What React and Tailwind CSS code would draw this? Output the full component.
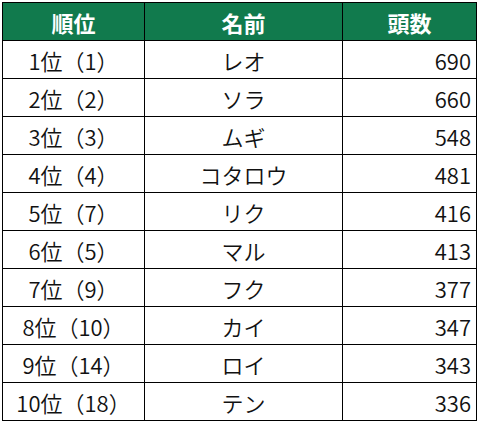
import React from 'react';

const rows = [
    ['1位（1）', 'レオ', '690'],
    ['2位（2）', 'ソラ', '660'],
    ['3位（3）', 'ムギ', '548'],
    ['4位（4）', 'コタロウ', '481'],
    ['5位（7）', 'リク', '416'],
    ['6位（5）', 'マル', '413'],
    ['7位（9）', 'フク', '377'],
    ['8位（10）', 'カイ', '347'],
    ['9位（14）', 'ロイ', '343'],
    ['10位（18）', 'テン', '336'],
];

const App = () => {
    return (
        <div className="w-[480px] h-[424px] bg-white pt-[2px] pl-[2px]" style={{ fontFamily: '"Noto Sans CJK JP", "Noto Sans", sans-serif' }}>
            <table className="border-collapse table-fixed w-[474px] text-[22px] text-[#111] font-[350]">
                <colgroup>
                    <col className="w-[142px]" />
                    <col className="w-[198px]" />
                    <col className="w-[134px]" />
                </colgroup>
                <thead>
                    <tr className="h-[38px] bg-[#117a4d] text-white">
                        <th className="border border-black text-center p-0 leading-none font-bold">順位</th>
                        <th className="border border-black text-center p-0 leading-none font-bold">名前</th>
                        <th className="border border-black text-center p-0 leading-none font-bold">頭数</th>
                    </tr>
                </thead>
                <tbody>
                    {rows.map(([rank, name, count]) => (
                        <tr key={rank} className="h-[38px]">
                            <td className="border border-black text-center p-0 leading-none">{rank}</td>
                            <td className="border border-black text-center p-0 leading-none">{name}</td>
                            <td className="border border-black text-right p-0 pr-[5px] leading-none">{count}</td>
                        </tr>
                    ))}
                </tbody>
            </table>
        </div>
    );
};

export default App;
